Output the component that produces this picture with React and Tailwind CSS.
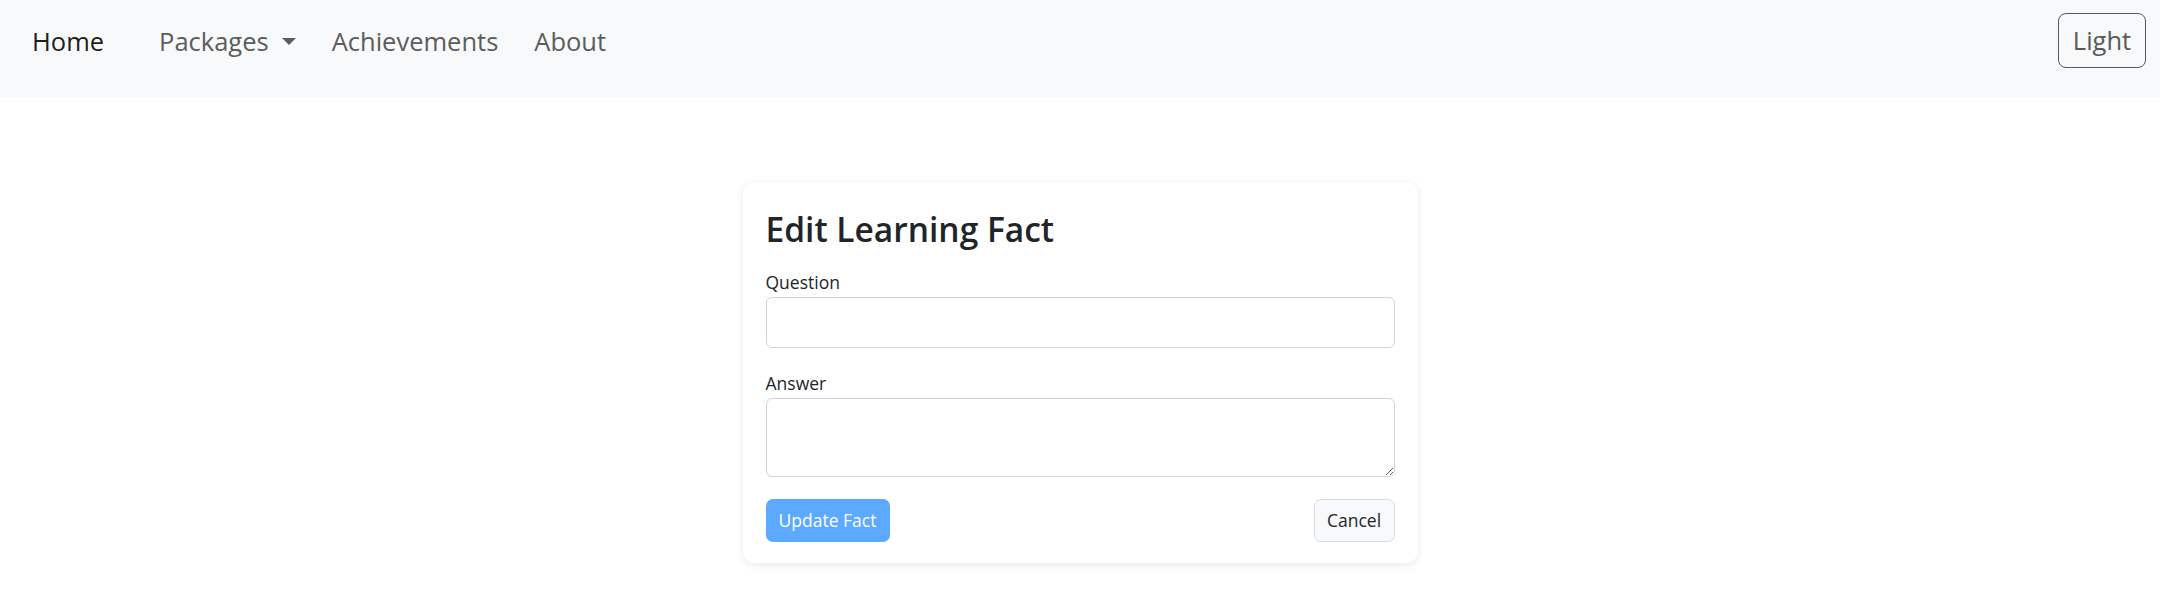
import React from "react";

export default function App() {
  const font = { fontFamily: '"Open Sans", "Noto Sans", sans-serif' };
  return (
    <div className="min-h-[614px] bg-white" style={font}>
      <nav className="h-[97px] bg-[#f8f9fa] flex items-center justify-between pl-[32px] pr-[14px] pb-[16px]">
        <div className="flex items-center text-[25.5px] leading-none pt-[2px]">
          <a className="text-black/90 mr-[55px]">Home</a>
          <a className="text-[#5c5c5c] flex items-center mr-[36px]">
            Packages
            <span className="ml-[13px] w-0 h-0 border-l-[7px] border-r-[7px] border-t-[7px] border-l-transparent border-r-transparent border-t-[#5c5c5c]" />
          </a>
          <a className="text-[#5c5c5c] mr-[36px]">Achievements</a>
          <a className="text-[#5c5c5c]">About</a>
        </div>
        <button className="w-[88px] h-[55px] border border-[#595959] rounded-[8px] text-[25.5px] text-[#595959] flex items-center justify-center">
          Light
        </button>
      </nav>
      <div className="pt-[85px]">
        <div className="w-[675px] mx-auto bg-white rounded-[12px] shadow-[0_2px_9px_rgba(0,0,0,0.09)] pt-[24px] px-[23px] pb-[21px]">
          <h3 className="text-[33.5px] font-semibold leading-[46px] text-[#212529] mb-[16px]">Edit Learning Fact</h3>
          <label className="block text-[17.5px] leading-[29px] text-[#212529]">Question</label>
          <input className="block w-full h-[51px] border border-[#ced4da] rounded-[6px] outline-none" />
          <label className="block text-[17.5px] leading-[29px] text-[#212529] mt-[21px]">Answer</label>
          <textarea className="block w-full h-[79px] border border-[#ced4da] rounded-[6px] outline-none" />
          <div className="flex justify-between mt-[22px]">
            <button className="w-[124px] h-[43px] rounded-[7px] bg-[#5caaff] text-white text-[17.5px]">Update Fact</button>
            <button className="w-[81px] h-[43px] rounded-[7px] bg-[#f8f9fa] border border-[#dadde0] text-[#212529] text-[17.5px]">Cancel</button>
          </div>
        </div>
      </div>
    </div>
  );
}
